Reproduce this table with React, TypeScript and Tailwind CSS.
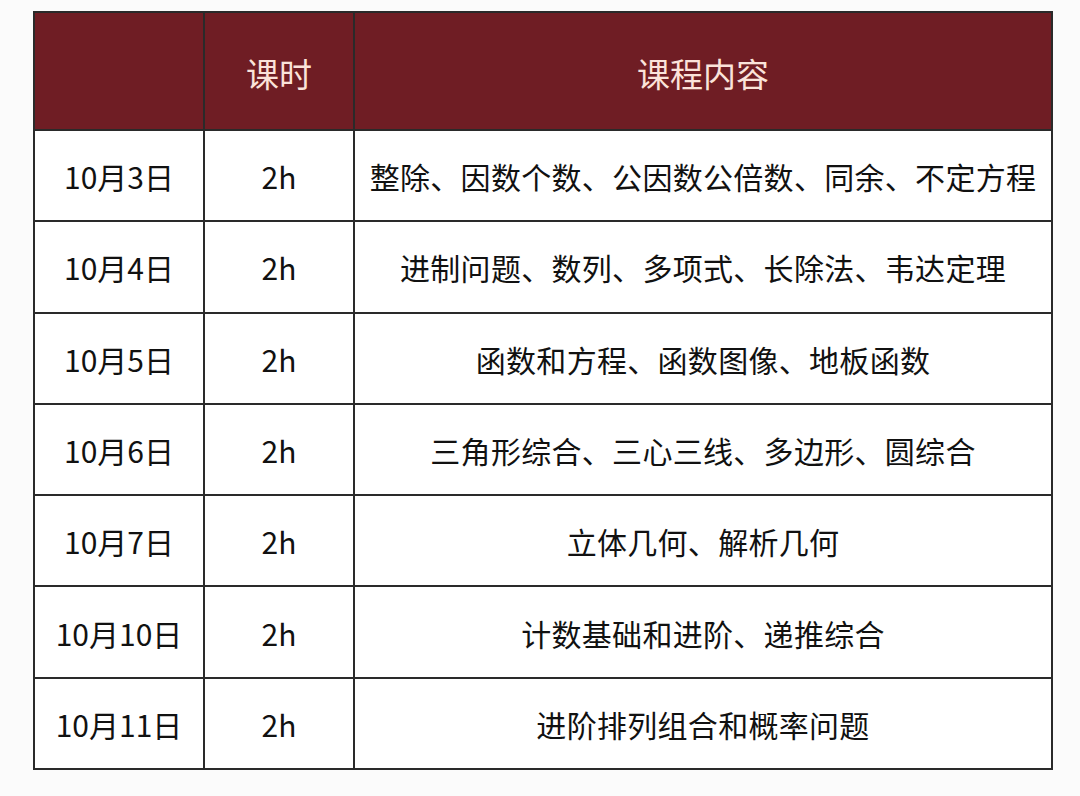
import React from "react";

const rows: [string, string, string][] = [
  ["10月3日", "2h", "整除、因数个数、公因数公倍数、同余、不定方程"],
  ["10月4日", "2h", "进制问题、数列、多项式、长除法、韦达定理"],
  ["10月5日", "2h", "函数和方程、函数图像、地板函数"],
  ["10月6日", "2h", "三角形综合、三心三线、多边形、圆综合"],
  ["10月7日", "2h", "立体几何、解析几何"],
  ["10月10日", "2h", "计数基础和进阶、递推综合"],
  ["10月11日", "2h", "进阶排列组合和概率问题"],
];

export default function App() {
  return (
    <div
      className="w-[1080px] h-[796px] bg-[#fbfbfb] pl-[33px] pt-[11px]"
      style={{ fontFamily: '"Noto Sans CJK SC", "Noto Sans", sans-serif' }}
    >
      <table className="w-[1020px] border-collapse border-2 border-[#2a2a2a] table-fixed">
        <colgroup>
          <col className="w-[170px]" />
          <col className="w-[150px]" />
          <col />
        </colgroup>
        <thead>
          <tr className="h-[118px] bg-[#6f1d24] text-[#fbe3da] text-[33px]">
            <th className="border-2 border-[#2a2a2a] font-normal"></th>
            <th className="border-2 border-[#2a2a2a] font-normal pt-[6px]">课时</th>
            <th className="border-2 border-[#2a2a2a] font-normal pt-[6px]">课程内容</th>
          </tr>
        </thead>
        <tbody>
          {rows.map(([date, hours, content]) => (
            <tr key={date} className="h-[91.3px] bg-white text-[#111] text-[30px] font-normal">
              <td className="border-2 border-[#2a2a2a] text-center pt-[2px]">{date}</td>
              <td className="border-2 border-[#2a2a2a] text-center pt-[2px]">{hours}</td>
              <td className="border-2 border-[#2a2a2a] text-center pt-[2px] tracking-[0.3px]">{content}</td>
            </tr>
          ))}
        </tbody>
      </table>
    </div>
  );
}
